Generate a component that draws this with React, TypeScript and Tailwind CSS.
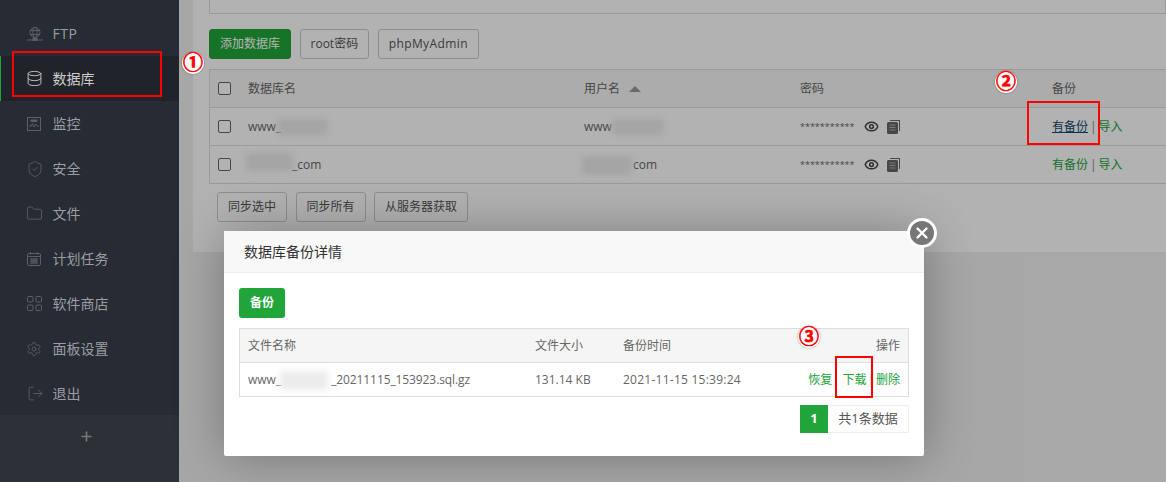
import { ReactNode } from 'react';
import { Database, ShieldCheck, Folder, Settings, LogOut, Plus, Eye, X } from 'lucide-react';

const FONT = "font-['Open_Sans','Noto_Sans_CJK_SC',sans-serif]";

const GlobeIcon = () => (
  <svg width="16" height="14" viewBox="0 0 16 14" fill="none" stroke="currentColor" strokeWidth="1">
    <circle cx="8" cy="5.5" r="5" />
    <ellipse cx="8" cy="5.5" rx="2.2" ry="5" />
    <path d="M3 3.5h10M3 7.5h10M0 13h16M8 10.5V13" />
    <rect x="6" y="11.5" width="4" height="2" fill="currentColor" />
  </svg>
);

const MonitorIcon = () => (
  <svg width="14" height="14" viewBox="0 0 14 14" fill="none" stroke="currentColor" strokeWidth="1">
    <rect x="0.5" y="0.5" width="13" height="13" />
    <path d="M2 9h2l1.5-2.5L7 10l1.5-3L10 9h2" />
    <path d="M4 3h6v1.5H4z" fill="currentColor" />
  </svg>
);

const CalendarIcon = () => (
  <svg width="14" height="14" viewBox="0 0 14 14" fill="none" stroke="currentColor" strokeWidth="1">
    <rect x="0.5" y="1.5" width="13" height="12" rx="1.5" />
    <path d="M0.5 4.5h13M3.5 0v2.5M10.5 0v2.5M3 7h8M3 9h8M3 11h8M5 6.5v5M7 6.5v5M9 6.5v5" />
  </svg>
);

const GridIcon = () => (
  <svg width="15" height="15" viewBox="0 0 15 15" fill="none" stroke="currentColor" strokeWidth="1">
    <rect x="0.5" y="0.5" width="5.5" height="5.5" rx="1" />
    <rect x="9" y="0.5" width="5.5" height="5.5" rx="1" />
    <rect x="0.5" y="9" width="5.5" height="5.5" rx="1" />
    <rect x="9" y="9" width="5.5" height="5.5" rx="1" />
  </svg>
);

const CopyIcon = () => (
  <svg width="13" height="14" viewBox="0 0 13 14" className="text-[#666]">
    <path d="M3 0h10v11h-1V1H3z" fill="currentColor" />
    <rect x="0" y="2" width="11" height="12" rx="1.5" fill="currentColor" />
    <path d="M2.5 5h6M2.5 7.5h6M2.5 10h6" stroke="#b2b2b2" strokeWidth="1" />
  </svg>
);

const navItems: { label: string; icon: ReactNode; active?: boolean }[] = [
  { label: 'FTP', icon: <GlobeIcon /> },
  { label: '数据库', icon: <Database size={17} strokeWidth={1.4} className="text-[#bbb] -ml-[1.5px]" />, active: true },
  { label: '监控', icon: <MonitorIcon /> },
  { label: '安全', icon: <ShieldCheck size={18} strokeWidth={1.2} className="-ml-[1.5px]" /> },
  { label: '文件', icon: <Folder size={17} strokeWidth={1.3} className="-ml-[1px]" /> },
  { label: '计划任务', icon: <CalendarIcon /> },
  { label: '软件商店', icon: <GridIcon /> },
  { label: '面板设置', icon: <Settings size={16} strokeWidth={1.3} className="-ml-[1px]" /> },
  { label: '退出', icon: <LogOut size={17} strokeWidth={1.3} /> },
];

const Sidebar = () => (
  <div className="w-[179px] shrink-0 h-full bg-[#272b33] flex flex-col pt-[11px]">
    {navItems.map((item) => (
      <div
        key={item.label}
        className={`h-[45px] shrink-0 flex items-center text-[14px] ${
          item.active ? 'bg-[#20242a] border-l border-[#20a53a] pl-[26px] text-[#ccc]' : 'pl-[27px] text-[#9a9ea3]'
        }`}
      >
        <span className={`w-[25.5px] shrink-0 flex ${item.active ? '' : 'text-[#5c5f63]'}`}>{item.icon}</span>
        <span className={item.label === 'FTP' ? 'tracking-[0.5px]' : ''}>{item.label}</span>
      </div>
    ))}
    <div className="flex-1 bg-[#2c3138] flex justify-center pt-[14px] pr-[7px] mt-[-1px]">
      <Plus size={15} strokeWidth={2.6} className="text-[#777]" />
    </div>
  </div>
);

const Btn = ({ children, green }: { children: ReactNode; green?: boolean }) => (
  <button
    className={`h-[30px] px-[10px] rounded-[3px] text-[12px] border ${
      green ? 'bg-[#20a53a] border-[#20a53a] text-white' : 'bg-white border-[#ccc] text-[#555]'
    }`}
  >
    {children}
  </button>
);

const Checkbox = () => <span className="block w-[13px] h-[13px] border border-[#666] rounded-[2px] bg-white" />;

const Smudge = ({ className }: { className: string }) => (
  <span className={`absolute bg-[#ececec] blur-[3px] ${className}`} />
);

const DbRow = ({ name, user, hover }: { name: ReactNode; user: ReactNode; hover?: boolean }) => (
  <div className="h-[38px] grid grid-cols-[38px_336px_216px_252px_1fr] items-center border-b border-[#ddd] text-[12px] text-[#666]">
    <span className="pl-[8px]">
      <Checkbox />
    </span>
    <span className="relative">{name}</span>
    <span className="relative">{user}</span>
    <span className="flex items-center">
      <span className="w-[63.5px] text-[9px] leading-none">***********</span>
      <Eye size={15} strokeWidth={2.4} className="text-[#444] mr-[8.5px]" />
      <CopyIcon />
    </span>
    <span className="text-[#20a53a]">
      <span className={hover ? 'text-[#0c4a6e] underline' : ''}>有备份</span>
      <span className="text-[#888] mx-[2px]">|</span>导入
    </span>
  </div>
);

const DbPanel = () => (
  <div className="ml-[14px] h-[252px] bg-white pl-[16px] flex flex-col">
    <div className="h-[14px] border border-t-0 border-[#ddd] shrink-0" />
    <div className="flex gap-[8.5px] mt-[15px] shrink-0">
      <Btn green>添加数据库</Btn>
      <Btn>root密码</Btn>
      <Btn>
        <span className="tracking-[0.4px]">phpMyAdmin</span>
      </Btn>
    </div>
    <div className="mt-[10px] border border-r-0 border-b-0 border-[#ddd] shrink-0">
      <div className="h-[38px] grid grid-cols-[38px_336px_216px_252px_1fr] items-center border-b border-[#ddd] bg-[#f6f6f6] text-[12px] text-[#666]">
        <span className="pl-[8px]">
          <Checkbox />
        </span>
        <span>数据库名</span>
        <span className="flex items-center gap-[9px]">
          用户名
          <span className="w-0 h-0 border-x-[6px] border-x-transparent border-b-[6px] border-b-[#999]" />
        </span>
        <span>密码</span>
        <span>备份</span>
      </div>
      <DbRow
        hover
        name={
          <>
            www_
            <Smudge className="left-[30px] top-[1px] w-[50px] h-[16px]" />
          </>
        }
        user={
          <>
            www
            <Smudge className="left-[28px] top-[1px] w-[52px] h-[16px]" />
          </>
        }
      />
      <DbRow
        name={
          <>
            <span className="pl-[44px]">_com</span>
            <Smudge className="left-[-2px] top-[-3px] w-[47px] h-[18px]" />
          </>
        }
        user={
          <>
            <span className="pl-[49px]">com</span>
            <Smudge className="left-[-2px] top-[0px] w-[50px] h-[19px]" />
          </>
        }
      />
    </div>
    <div className="flex gap-[8.5px] mt-[8px] ml-[8px] shrink-0">
      <Btn>同步选中</Btn>
      <Btn>同步所有</Btn>
      <Btn>从服务器获取</Btn>
    </div>
  </div>
);

const BackupModal = () => (
  <div className="absolute left-[45px] top-[231px] w-[700px] h-[225px] bg-white rounded-[2px] shadow-[1px_1px_50px_rgba(0,0,0,0.3)]">
    <div className="h-[42px] bg-[#f8f8f8] border-b border-[#eee] pl-[20px] flex items-center text-[14px] text-[#333]">
      数据库备份详情
    </div>
    <div className="px-[15px] pt-[15px]">
      <button className="w-[46px] h-[30px] bg-[#20a53a] rounded-[3px] text-white text-[12px] font-bold block">备份</button>
      <div className="mt-[10px] border border-[#ddd] text-[12px] text-[#666]">
        <div className="h-[34px] bg-[#f5f5f5] border-b border-[#ddd] grid grid-cols-[287px_88px_1fr_auto] items-center pl-[8px] pr-[8px]">
          <span>文件名称</span>
          <span>文件大小</span>
          <span>备份时间</span>
          <span>操作</span>
        </div>
        <div className="h-[33px] grid grid-cols-[287px_88px_1fr_auto] items-center pl-[8px] pr-[8px]">
          <span className="relative">
            www_
            <Smudge className="left-[32px] top-[0px] w-[48px] h-[19px]" />
            <span className="pl-[50px] tracking-[-0.1px]">_20211115_153923.sql.gz</span>
          </span>
          <span>131.14 KB</span>
          <span className="tracking-[0.25px]">2021-11-15 15:39:24</span>
          <span className="text-[#20a53a]">
            恢复<span className="inline-block w-[10px]" />下载<span className="text-[#888] mx-[1.5px]">|</span>删除
          </span>
        </div>
      </div>
      <div className="flex justify-end mt-[8px] text-[13px]">
        <span className="w-[28px] h-[28px] bg-[#20a53a] text-white font-bold flex items-center justify-center">1</span>
        <span className="w-[81px] h-[28px] border border-[#eee] border-l-0 text-[#555] flex items-center justify-center">
          共1条数据
        </span>
      </div>
    </div>
    <span className="absolute right-[-13px] top-[-13px] w-[30px] h-[30px] rounded-full bg-[#777] border-[3px] border-white flex items-center justify-center">
      <X size={18} strokeWidth={3} className="text-white" />
    </span>
  </div>
);

const Mark = ({ n, className }: { n: string; className: string }) => (
  <span
    className={`absolute w-[22px] h-[22px] rounded-full bg-white text-[#f00] font-bold text-[20px] leading-[22px] text-center [-webkit-text-stroke:0.6px_#f00] shadow-[0_0_2px_rgba(0,0,0,0.4)] ${className}`}
  >
    {n}
  </span>
);

const RedBox = ({ className }: { className: string }) => (
  <span className={`absolute border-2 border-[#f00] ${className}`} />
);

export default function App() {
  return (
    <div className={`relative w-[1166px] h-[482px] overflow-hidden flex ${FONT}`}>
      <Sidebar />
      <div className="relative flex-1 h-full bg-[#f0f0f0]">
        <DbPanel />
        <div className="absolute inset-0 bg-black/30" />
        <BackupModal />
      </div>
      <RedBox className="left-[12px] top-[51px] w-[150px] h-[46px]" />
      <RedBox className="left-[1027px] top-[101px] w-[73px] h-[44px]" />
      <RedBox className="left-[835px] top-[356px] w-[38px] h-[42px]" />
      <Mark n="①" className="left-[182px] top-[52px]" />
      <Mark n="②" className="left-[995px] top-[71px]" />
      <Mark n="③" className="left-[798px] top-[326px]" />
    </div>
  );
}
